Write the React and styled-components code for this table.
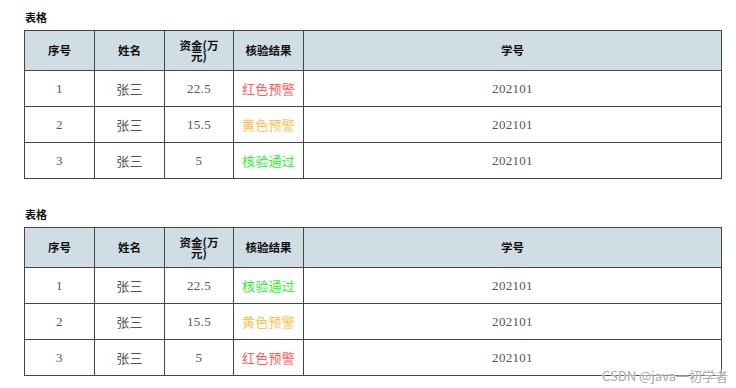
import React from 'react';
import styled, { createGlobalStyle } from 'styled-components';

//////////////////////////////////////////////////

const GlobalStyle = createGlobalStyle`
  html, body {
    margin: 0;
    padding: 0;
    background: #fff;
  }
`;

const tables = [
  [
    { id: 1, name: '张三', money: '22.5', result: '红色预警', level: 'red', no: '202101' },
    { id: 2, name: '张三', money: '15.5', result: '黄色预警', level: 'yellow', no: '202101' },
    { id: 3, name: '张三', money: '5', result: '核验通过', level: 'green', no: '202101' },
  ],
  [
    { id: 1, name: '张三', money: '22.5', result: '核验通过', level: 'green', no: '202101' },
    { id: 2, name: '张三', money: '15.5', result: '黄色预警', level: 'yellow', no: '202101' },
    { id: 3, name: '张三', money: '5', result: '红色预警', level: 'red', no: '202101' },
  ],
];

const levelColors = {
  red: '#ff5c5c',
  yellow: '#ffc04d',
  green: '#33ee33',
};

const App = () => {
  return (
    <Page>
      <GlobalStyle />
      {tables.map((rows, t) => (
        <Section key={t}>
          <Title>表格</Title>
          <StyledTable>
            <colgroup>
              <col style={{ width: 70 }} />
              <col style={{ width: 70 }} />
              <col style={{ width: 69 }} />
              <col style={{ width: 70 }} />
              <col />
            </colgroup>
            <thead>
              <tr>
                <Th>序号</Th>
                <Th>姓名</Th>
                <Th>资金(万元)</Th>
                <Th>核验结果</Th>
                <Th>学号</Th>
              </tr>
            </thead>
            <tbody>
              {rows.map((row, index) => (
                <tr key={index}>
                  <Td>{row.id}</Td>
                  <Td>{row.name}</Td>
                  <Td>{row.money}</Td>
                  <Td $color={levelColors[row.level]}>{row.result}</Td>
                  <Td>{row.no}</Td>
                </tr>
              ))}
            </tbody>
          </StyledTable>
        </Section>
      ))}
      <Watermark>CSDN @java一初学者</Watermark>
    </Page>
  );
};

//////////////////////////////////////////////////

const Page = styled.div`
  position: relative;
  width: 736px;
  height: 388px;
  padding: 10px 0 0 24px;
  box-sizing: border-box;
  display: flex;
  flex-direction: column;
  gap: 28px;
  overflow: hidden;
`;

const Section = styled.div`
  display: flex;
  flex-direction: column;
  gap: 6px;
`;

const Title = styled.div`
  font-family: "Noto Sans CJK SC", sans-serif;
  font-weight: 700;
  font-size: 11px;
  line-height: 14px;
  color: #111;
  padding-left: 1px;
`;

const StyledTable = styled.table`
  width: 698px;
  table-layout: fixed;
  border-collapse: collapse;
  border: 1px solid #777;
`;

const Th = styled.th`
  height: 40px;
  padding: 0 10px;
  box-sizing: border-box;
  background: #d0dde4;
  border: 1px solid #444;
  font-family: "Noto Sans CJK SC", sans-serif;
  font-weight: 700;
  font-size: 11.5px;
  line-height: 11px;
  color: #111;
  text-align: center;
  vertical-align: middle;
`;

const Td = styled.td`
  height: 36px;
  padding: 0 4px;
  box-sizing: border-box;
  border: 1px solid #444;
  font-family: "Liberation Serif", "Noto Sans CJK SC", serif;
  font-size: 13px;
  color: ${p => p.$color || '#555'};
  text-align: center;
  vertical-align: middle;
  letter-spacing: 0.3px;
`;

const Watermark = styled.div`
  position: absolute;
  right: 8px;
  bottom: 3px;
  font-family: "Noto Sans CJK SC", sans-serif;
  font-size: 13px;
  color: #a8a8a8;
  text-shadow: 0 0 2px #fff, 0 0 2px #fff;
`;

//////////////////////////////////////////////////

export default App;
